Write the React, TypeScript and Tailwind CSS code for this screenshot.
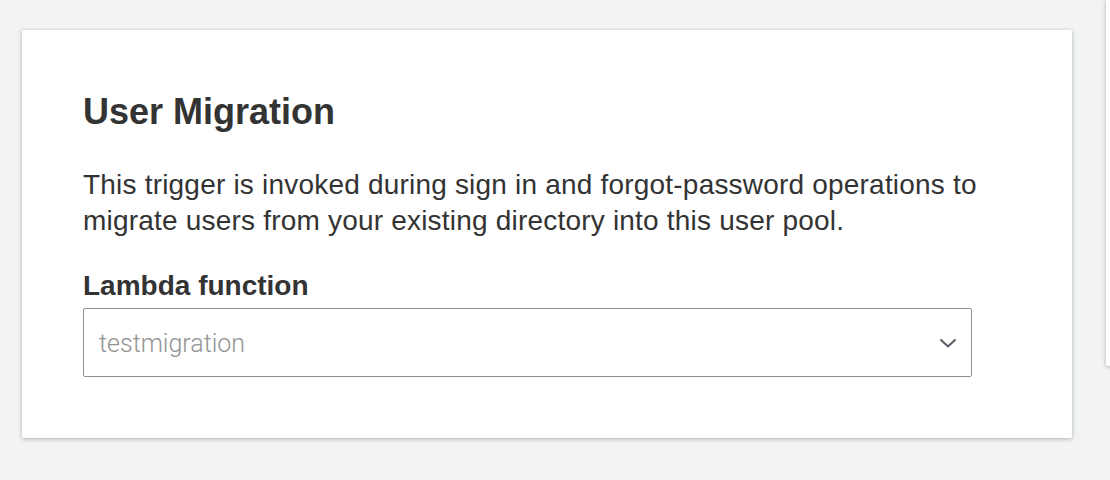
import React from "react";

export default function App() {
  return (
    <div
      className="w-[1110px] h-[480px] overflow-hidden bg-[#f2f3f3] flex items-start text-[#333333]"
      style={{ fontFamily: '"Liberation Sans", Arial, sans-serif' }}
    >
      <div className="ml-[22px] mt-[30px] w-[1050px] h-[408px] shrink-0 bg-white rounded-[2px] shadow-[0_1px_4px_rgba(0,28,36,0.3)] pl-[61px] pt-[60px]">
        <h2 className="text-[36px] leading-[44px] font-bold">User Migration</h2>
        <p className="mt-[33px] text-[28px] leading-[36px] tracking-[0.2px] w-[940px]">
          This trigger is invoked during sign in and forgot-password operations to
          <br />
          migrate users from your existing directory into this user pool.
        </p>
        <div className="mt-[31px] text-[28px] leading-[32px] font-bold">Lambda function</div>
        <div className="mt-[6px] w-[889px] h-[69px] border border-[#8c9191] rounded-[2px] flex items-center justify-between pl-[15px] pr-[14px]">
          <span className="pt-[3px] text-[25px] text-[#939393] font-light" style={{ fontFamily: "Roboto, sans-serif" }}>
            testmigration
          </span>
          <svg width="18" height="10" viewBox="0 0 18 10" fill="none">
            <path d="M1.5 1.5 L9 8.5 L16.5 1.5" stroke="#545b64" strokeWidth="2" />
          </svg>
        </div>
      </div>
      <div className="ml-[34px] w-[20px] h-[366px] shrink-0 bg-white rounded-b-[2px] shadow-[0_1px_4px_rgba(0,28,36,0.3)]" />
    </div>
  );
}
